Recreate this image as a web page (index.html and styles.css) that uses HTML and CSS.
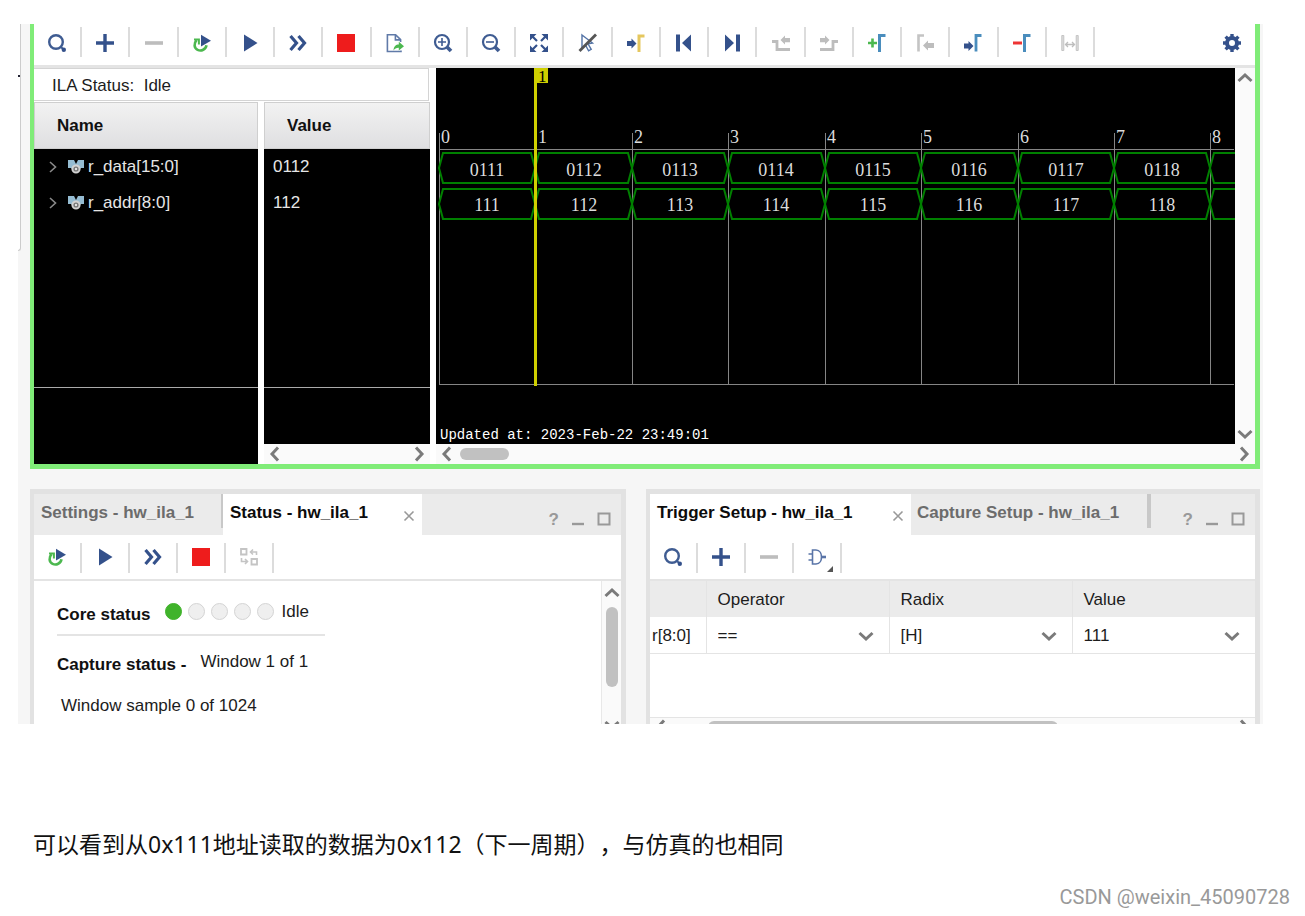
FILE: index.html
```html
<!DOCTYPE html>
<html lang="zh-CN">
<head>
<meta charset="utf-8">
<title>ILA 波形</title>
<link rel="stylesheet" href="styles.css">
</head>
<body>
<svg class="defs" aria-hidden="true">
  <symbol id="search" viewBox="0 0 20 20"><circle cx="9" cy="9" r="6.8" fill="none" stroke="#3f5c92" stroke-width="2.4"/><path d="M13.5 13.5l3 3" stroke="#3f5c92" stroke-width="2"/><circle cx="16.8" cy="16.8" r="2.2" fill="#34518b"/></symbol>
  <symbol id="plus" viewBox="0 0 20 20"><path d="M10 1v18M1 10h18" stroke="#34518b" stroke-width="3.4"/></symbol>
  <symbol id="minus" viewBox="0 0 20 20"><path d="M1 10h18" stroke="#bdbdbd" stroke-width="3.6"/></symbol>
  <symbol id="rerun" viewBox="0 0 20 20"><path d="M4.6 7.2C1.6 10.500 2 15 5.600 16.800c3.700 1.800 8.200-.3 8.900-4.600" fill="none" stroke="#4cb84f" stroke-width="2.600"/><path d="M2 6.600h4.900v4.800" fill="none" stroke="#4cb84f" stroke-width="2"/><path d="M9 1.800l10 5.900-10 5.900z" fill="#34518b"/></symbol>
  <symbol id="play" viewBox="0 0 20 20"><path d="M4 1.500l13.500 8.500L4 18.500z" fill="#34518b"/></symbol>
  <symbol id="fast" viewBox="0 0 20 20"><path d="M2.500 3l6 7-6 7M10.500 3l6 7-6 7" fill="none" stroke="#34518b" stroke-width="3.200"/></symbol>
  <symbol id="stop" viewBox="0 0 20 20"><path d="M1 1h18v18H1z" fill="#ee1c1c"/></symbol>
  <symbol id="export" viewBox="0 0 20 20"><path d="M16 17.500v1H2.400V1.700h8.200l5 5V9M10.400 1.700v5.200h5.200" fill="none" stroke="#607aa8" stroke-width="1.600"/><path d="M8.500 17.500c.3-4.200 2.300-6 5.300-6V8.800l5.200 4.500-5.200 4.200v-2.700c-2.300-.1-4 .7-5.300 2.700z" fill="#4cb84f"/></symbol>
  <symbol id="zoomin" viewBox="0 0 20 20"><circle cx="9" cy="9" r="7" fill="none" stroke="#3f5c92" stroke-width="2.200"/><path d="M5 9h8M9 5v8" stroke="#3f5c92" stroke-width="1.600"/><path d="M14 14l4 4" stroke="#3f5c92" stroke-width="3.800"/></symbol>
  <symbol id="zoomout" viewBox="0 0 20 20"><circle cx="9" cy="9" r="7" fill="none" stroke="#3f5c92" stroke-width="2.200"/><path d="M5 9h8" stroke="#3f5c92" stroke-width="1.600"/><path d="M14 14l4 4" stroke="#3f5c92" stroke-width="3.800"/></symbol>
  <symbol id="fit" viewBox="0 0 20 20"><path d="M1 1h6.500L1 7.500zM19 1v6.500L12.500 1zM1 19v-6.500L7.500 19zM19 19h-6.500l6.500-6.500z" fill="#34518b"/><path d="M3 3l5 5M17 3l-5 5M3 17l5-5M17 17l-5-5" stroke="#34518b" stroke-width="2.200"/></symbol>
  <symbol id="nocursor" viewBox="0 0 20 20"><path d="M4 2l10.500 8-4.500.8 3.200 5.500-2.600 1.500-3-5.600L4 15z" fill="none" stroke="#5272a5" stroke-width="1.400"/><path d="M1.500 18L18 1.500" stroke="#555" stroke-width="2.800"/></symbol>
  <symbol id="tomark" viewBox="0 0 20 20"><path d="M1 8h4.500V5.500L10.500 10.500l-5 5V13H1z" fill="#34518b"/><path d="M13 19V3h5.500" fill="none" stroke="#e5c75e" stroke-width="3"/></symbol>
  <symbol id="first" viewBox="0 0 20 20"><path d="M2 1.500h4v17H2zM17 1.500v17L8 10z" fill="#34518b"/></symbol>
  <symbol id="last" viewBox="0 0 20 20"><path d="M14 1.500h4v17h-4zM3 1.500v17l9-8.500z" fill="#34518b"/></symbol>
  <symbol id="prevtr" viewBox="0 0 20 20"><path d="M1 8.500h5v8h13" fill="none" stroke="#bdbdbd" stroke-width="2.800"/><path d="M9.500 7l4.500-4.500v2.500h5v4.200h-5v2.400z" fill="#bdbdbd"/></symbol>
  <symbol id="nexttr" viewBox="0 0 20 20"><path d="M19 8.500h-5v8H1" fill="none" stroke="#bdbdbd" stroke-width="2.800"/><path d="M10.500 7L6 2.500v2.500H1v4.200h5v2.400z" fill="#bdbdbd"/></symbol>
  <symbol id="addmark" viewBox="0 0 20 20"><path d="M5.500 5.500v9M1 10h9" stroke="#4cb84f" stroke-width="2.600"/><path d="M12.500 19V2.500h6" fill="none" stroke="#4a8dbd" stroke-width="3"/></symbol>
  <symbol id="prevmark" viewBox="0 0 20 20"><path d="M3.500 18.500V2.500h5.500" fill="none" stroke="#c4c4c4" stroke-width="2.600"/><path d="M8 12.500l5-5V10h6v5h-6v2.500z" fill="#bdbdbd"/></symbol>
  <symbol id="nextmark" viewBox="0 0 20 20"><path d="M1 10.500h4.500V8l5 5-5 5v-2.500H1z" fill="#34518b"/><path d="M13 18.500v-16h5.500" fill="none" stroke="#4a8dbd" stroke-width="2.800"/></symbol>
  <symbol id="delmark" viewBox="0 0 20 20"><path d="M1 10h9" stroke="#ee3434" stroke-width="3"/><path d="M12.500 19V2.500h6" fill="none" stroke="#4a8dbd" stroke-width="3"/></symbol>
  <symbol id="range" viewBox="0 0 20 20"><path d="M1.800 2.500h2v15h-2zM16.200 2.500h2v15h-2z" fill="#ddd" stroke="#c4c4c4"/><path d="M5.500 11.500h9M8 9l-2.500 2.500L8 14M12 9l2.500 2.500L12 14" fill="none" stroke="#bdbdbd" stroke-width="1.300"/></symbol>
  <symbol id="gear" viewBox="0 0 20 20"><circle cx="10" cy="10" r="5" fill="none" stroke="#34518b" stroke-width="4"/><path d="M10 1v3.500M10 15.500V19M1 10h3.500M15.500 10H19M3.600 3.600l2.500 2.500M13.900 13.900l2.500 2.500M3.600 16.400l2.500-2.500M13.900 6.100l2.500-2.500" stroke="#34518b" stroke-width="3.400"/></symbol>
  <symbol id="swap" viewBox="0 0 20 20"><path d="M2 2h5.500v5.500H2zM12.500 12H18v5.500h-5.500z" fill="none" stroke="#c4c4c4" stroke-width="1.800"/><path d="M17.500 8V5H12M14 2.500L11.500 5 14 7.500M2.500 11v3.500H8M6 12l2.500 2.500L6 17" fill="none" stroke="#c4c4c4" stroke-width="1.600"/></symbol>
  <symbol id="gate" viewBox="0 0 20 20"><path d="M5.500 3H9c4 0 5.500 4 5.500 7S13 17 9 17H5.500zM1.500 7h4M1.500 13h4" fill="none" stroke="#5a75a8" stroke-width="1.600"/><path d="M14.500 10H19" stroke="#5a75a8" stroke-width="2.600"/></symbol>
  <symbol id="bus" viewBox="0 0 16 14"><path d="M0 0h6l2 4 2-4h6v8h-3l-2 2H5L3 8H0z" fill="#95bcd2"/><circle cx="8" cy="9" r="3.600" fill="#777" stroke="#d2d2d2" stroke-width="2"/><circle cx="8" cy="9" r="1.200" fill="#e4e4e4"/></symbol>
  <symbol id="down" viewBox="0 0 16 16"><path d="M1.500 5L8 11l6.500-6" fill="none" stroke="#7a7a7a" stroke-width="3"/></symbol>
  <symbol id="up" viewBox="0 0 16 16"><path d="M1.500 11L8 5l6.500 6" fill="none" stroke="#7a7a7a" stroke-width="3"/></symbol>
  <symbol id="left" viewBox="0 0 16 16"><path d="M11 1.500L5 8l6 6.500" fill="none" stroke="#7a7a7a" stroke-width="3"/></symbol>
  <symbol id="right" viewBox="0 0 16 16"><path d="M5 1.500L11 8l-6 6.500" fill="none" stroke="#7a7a7a" stroke-width="3"/></symbol>
  <symbol id="close" viewBox="0 0 12 12"><path d="M1.500 1.500l9 9M10.500 1.500l-9 9" stroke="#999" stroke-width="1.600"/></symbol>
  <symbol id="min" viewBox="0 0 14 14"><path d="M1 12h12" stroke="#999" stroke-width="2.400"/></symbol>
  <symbol id="max" viewBox="0 0 14 14"><path d="M1.500 1.500h11v11h-11z" fill="none" stroke="#999" stroke-width="2"/></symbol>
</svg>

<main class="ide">
  <span class="edge"></span><span class="speck"></span>
  <section class="scope">
    <div class="bar">
      <div class="tools many">
        <button aria-label="Search"><svg><use href="#search"/></svg></button>
        <button aria-label="Add"><svg><use href="#plus"/></svg></button>
        <button aria-label="Remove"><svg><use href="#minus"/></svg></button>
        <button aria-label="Auto re-trigger"><svg><use href="#rerun"/></svg></button>
        <button aria-label="Run trigger"><svg><use href="#play"/></svg></button>
        <button aria-label="Run immediate"><svg><use href="#fast"/></svg></button>
        <button aria-label="Stop"><svg><use href="#stop"/></svg></button>
        <button aria-label="Export"><svg><use href="#export"/></svg></button>
        <button aria-label="Zoom in"><svg><use href="#zoomin"/></svg></button>
        <button aria-label="Zoom out"><svg><use href="#zoomout"/></svg></button>
        <button aria-label="Zoom fit"><svg><use href="#fit"/></svg></button>
        <button aria-label="Cursor off"><svg><use href="#nocursor"/></svg></button>
        <button aria-label="Go to cursor"><svg><use href="#tomark"/></svg></button>
        <button aria-label="First"><svg><use href="#first"/></svg></button>
        <button aria-label="Last"><svg><use href="#last"/></svg></button>
        <button aria-label="Previous transition"><svg><use href="#prevtr"/></svg></button>
        <button aria-label="Next transition"><svg><use href="#nexttr"/></svg></button>
        <button aria-label="Add marker"><svg><use href="#addmark"/></svg></button>
        <button aria-label="Previous marker"><svg><use href="#prevmark"/></svg></button>
        <button aria-label="Next marker"><svg><use href="#nextmark"/></svg></button>
        <button aria-label="Delete marker"><svg><use href="#delmark"/></svg></button>
        <button aria-label="Swap cursors"><svg><use href="#range"/></svg></button>
      </div>
      <div class="settings"><button aria-label="Settings"><svg><use href="#gear"/></svg></button></div>
    </div>
    <div class="view">
      <div class="signals">
        <div class="ila">ILA Status:&nbsp; Idle</div>
        <div class="cols">
          <div class="col name">
            <div class="head">Name</div>
            <div class="dark">
              <div class="sig"><svg class="twist" viewBox="0 0 8 12"><path d="M1 1l5.500 5L1 11" fill="none" stroke="#8a8a8a" stroke-width="1.600"/></svg><svg class="bus"><use href="#bus"/></svg>r_data[15:0]</div>
              <div class="sig"><svg class="twist" viewBox="0 0 8 12"><path d="M1 1l5.500 5L1 11" fill="none" stroke="#8a8a8a" stroke-width="1.600"/></svg><svg class="bus"><use href="#bus"/></svg>r_addr[8:0]</div>
              <div class="rule"></div>
            </div>
          </div>
          <div class="col value">
            <div class="head">Value</div>
            <div class="dark">
              <div class="sig">0112</div>
              <div class="sig">112</div>
              <div class="rule"></div>
            </div>
            <div class="hscroll"><svg><use href="#left"/></svg><svg><use href="#right"/></svg></div>
          </div>
        </div>
      </div>
      <div class="wave">
        <div class="plot">
          <svg class="canvas">
            <defs>
              <path id="cells" d="M3 100l4-15h88l4 15-4 15H7zM99 100l4-15h89l4 15-4 15h-89zM196 100l4-15h88l4 15-4 15h-88zM292 100l4-15h89l4 15-4 15h-89zM389 100l4-15h88l4 15-4 15h-88zM485 100l4-15h89l4 15-4 15h-89zM582 100l4-15h88l4 15-4 15h-88zM678 100l4-15h88l4 15-4 15h-88zM1600 85H778l-4 15 4 15h822"/>
            </defs>
            <path class="grid" d="M3.500 65v251M196.500 65v251M292.500 65v251M389.500 65v251M485.500 65v251M582.500 65v251M678.500 65v251M774.500 65v251M3 316.500h795M3 81.500h795"/>
            <use class="trace" href="#cells"/><use class="trace" href="#cells" y="36"/>
            <g class="digits">
              <text x="5" y="75">0</text><text x="102" y="75">1</text><text x="198" y="75">2</text><text x="294" y="75">3</text><text x="391" y="75">4</text><text x="487" y="75">5</text><text x="584" y="75">6</text><text x="680" y="75">7</text><text x="776" y="75">8</text>
            </g>
            <g class="digits mid">
              <text x="51" y="108">0111</text><text x="148" y="108">0112</text><text x="244" y="108">0113</text><text x="340" y="108">0114</text><text x="437" y="108">0115</text><text x="533" y="108">0116</text><text x="630" y="108">0117</text><text x="726" y="108">0118</text>
              <text x="51" y="143">111</text><text x="148" y="143">112</text><text x="244" y="143">113</text><text x="340" y="143">114</text><text x="437" y="143">115</text><text x="533" y="143">116</text><text x="630" y="143">117</text><text x="726" y="143">118</text>
            </g>
            <path d="M98 0h14v15h-11v303h-3z" fill="#cfcf00"/>
            <text class="flag" x="102" y="14">1</text>
            <text class="stamp" x="4" y="371">Updated at: 2023-Feb-22 23:49:01</text>
          </svg>
          <div class="vscroll"><svg><use href="#up"/></svg><svg><use href="#down"/></svg></div>
        </div>
        <div class="hscroll"><svg><use href="#left"/></svg><i class="thumb"></i><svg><use href="#right"/></svg></div>
      </div>
    </div>
  </section>

  <div class="panels">
    <section class="panel status">
      <div class="tabs">
        <button class="tab first">Settings - hw_ila_1</button>
        <button class="tab on">Status - hw_ila_1<svg><use href="#close"/></svg></button>
        <div class="win"><b>?</b><svg><use href="#min"/></svg><svg><use href="#max"/></svg></div>
      </div>
      <div class="tools">
        <button aria-label="Auto re-trigger"><svg><use href="#rerun"/></svg></button>
        <button aria-label="Run trigger"><svg><use href="#play"/></svg></button>
        <button aria-label="Run immediate"><svg><use href="#fast"/></svg></button>
        <button aria-label="Stop"><svg><use href="#stop"/></svg></button>
        <button aria-label="Toggle layout"><svg><use href="#swap"/></svg></button>
      </div>
      <div class="body">
        <div class="info">
          <div class="core"><b>Core status</b><i class="dot lit"></i><i class="dot"></i><i class="dot"></i><i class="dot"></i><i class="dot"></i><span>Idle</span></div>
          <div class="capture"><b>Capture status -</b><span>Window 1 of 1</span></div>
          <div class="sample">Window sample 0 of 1024</div>
        </div>
        <div class="vscroll"><svg><use href="#up"/></svg><i class="vthumb"></i><svg><use href="#down"/></svg></div>
      </div>
    </section>
    <section class="panel trigger">
      <div class="tabs">
        <button class="tab on">Trigger Setup - hw_ila_1<svg><use href="#close"/></svg></button>
        <button class="tab last">Capture Setup - hw_ila_1</button>
        <div class="win"><b>?</b><svg><use href="#min"/></svg><svg><use href="#max"/></svg></div>
      </div>
      <div class="tools">
        <button aria-label="Search"><svg><use href="#search"/></svg></button>
        <button aria-label="Add"><svg><use href="#plus"/></svg></button>
        <button aria-label="Remove"><svg><use href="#minus"/></svg></button>
        <button aria-label="Trigger condition" class="menu"><svg><use href="#gate"/></svg></button>
      </div>
      <div class="setup">
        <table>
          <thead><tr><th class="port"></th><th>Operator</th><th>Radix</th><th>Value</th></tr></thead>
          <tbody><tr>
            <td class="port">r[8:0]</td>
            <td><label class="pick"><select aria-label="Operator"><option>==</option></select><svg><use href="#down"/></svg></label></td>
            <td><label class="pick"><select aria-label="Radix"><option>[H]</option></select><svg><use href="#down"/></svg></label></td>
            <td><label class="pick"><select aria-label="Value"><option>111</option></select><svg><use href="#down"/></svg></label></td>
          </tr></tbody>
        </table>
        <div class="hscroll"><svg><use href="#left"/></svg><i class="thumb"></i><svg><use href="#right"/></svg></div>
      </div>
    </section>
  </div>
</main>
<p class="note">可以看到从0x111地址读取的数据为0x112（下一周期），与仿真的也相同</p>
<footer>CSDN @weixin_45090728</footer>
</body>
</html>
```
FILE: styles.css
```css
* { box-sizing: border-box; }
body { margin: 0; background: #fff; color: #1c1c1c; font: 17px/20px "Liberation Sans", Arial, sans-serif; }
button { padding: 0; border: 0; background: none; font: inherit; color: inherit; }
svg { display: block; flex: none; }
.defs { display: none; }

.ide { position: relative; margin: 24px 42px 0 18px; padding: 0 3px 0 12px; background: #f6f6f6; overflow: hidden; }
.edge { position: absolute; left: 0; top: 0; width: 3px; height: 227px; background: #fff; border: solid #ccc; border-width: 0 1px 1px 0; border-bottom-right-radius: 3px; }
.speck { position: absolute; left: 0; top: 51px; width: 2px; height: 2px; background: #223; }

.scope { border: solid #80ec78; border-width: 0 5px 5px 4px; background: #fff; }
.bar { display: flex; height: 44px; border-bottom: 3px solid #e4e4e4; }
.tools { display: flex; height: 46px; border-bottom: 2px solid #e4e4e4; }
.tools button { position: relative; width: 48px; height: 44px; padding-right: 2px; display: grid; place-items: center; }
.tools button::after { content: ""; position: absolute; right: 0; top: 8px; width: 2px; height: 30px; background: #dcdcdc; }
.tools svg, .settings svg { width: 20px; height: 20px; }
.tools.many { flex: 1; display: grid; grid-template-columns: repeat(22, 1fr); height: 38px; border: 0; }
.tools.many button { width: auto; height: 38px; }
.tools.many button::after { top: 3px; }
.settings { width: 160px; height: 38px; display: flex; align-items: center; justify-content: flex-end; padding-right: 13px; }

.view { display: flex; height: 396px; }
.signals { width: 396px; display: flex; flex-direction: column; }
.ila { height: 33px; margin-right: 1px; padding: 0 18px; line-height: 34px; border: 1px solid #d4d4d4; border-left: 0; }
.cols { flex: 1; display: flex; gap: 6px; padding-top: 1px; }
.col { display: flex; flex-direction: column; }
.name { width: 224px; }
.value { flex: 1; }
.head { height: 47px; padding: 0 22px; border: 1px solid #cfcfcf; background: linear-gradient(#f2f2f2, #dfdfe1); font-weight: bold; line-height: 45px; color: #111; }
.dark { flex: 1; position: relative; background: #000; color: #e6e6e6; }
.sig { display: flex; align-items: center; height: 36px; padding: 0 9px; }
.name .sig { padding-left: 15px; }
.twist { width: 8px; height: 12px; margin-right: 11px; }
.bus { width: 16px; height: 14px; margin-right: 4px; }
.rule { height: 1px; margin-top: 166px; background: #aaa; }
.hscroll { height: 20px; display: flex; align-items: center; justify-content: space-between; padding: 0 3px; background: #fafafa; }
.hscroll svg, .vscroll svg, .pick svg { width: 16px; height: 16px; }
.thumb { width: 49px; height: 12px; margin: 0 auto 0 5px; border-radius: 6px; background: #c1c1c1; }
.vscroll { width: 20px; display: flex; flex-direction: column; align-items: center; justify-content: space-between; padding: 2px 0; background: #fafafa; }

.wave { flex: 1; min-width: 0; margin-left: 6px; display: flex; flex-direction: column; }
.plot { flex: 1; display: flex; min-height: 0; }
.canvas { flex: 1; min-width: 0; height: 376px; background: #000; }
.grid { stroke: #858585; }
.trace { fill: none; stroke: #008000; stroke-width: 2; }
.digits { fill: #dcdcdc; font: 18px "Liberation Serif", serif; }
.mid { text-anchor: middle; }
.flag { fill: #000; font: 17px "Liberation Serif", serif; }
.stamp { fill: #fff; font: 14px "Liberation Mono", monospace; }

.panels { display: flex; gap: 20px; margin-top: 20px; height: 235px; }
.panel { border: 5px solid #e2e2e2; border-width: 5px 5px 0 4px; background: #fff; overflow: hidden; }
.status { width: 596px; }
.trigger { flex: 1; min-width: 0; }
.tabs { display: flex; height: 41px; background: #ebebeb; }
.tab { display: flex; align-items: center; height: 41px; padding: 0 7px 3px; font-weight: bold; color: #6c6c6c; white-space: nowrap; }
.tab.on { justify-content: space-between; background: #fff; color: #0c0c0c; }
.tab svg { width: 12px; height: 12px; margin-top: 5px; }
.first { position: relative; width: 189px; padding-left: 7px; }
.first::after, .last::after { content: ""; position: absolute; right: 0; top: 0; width: 2px; height: 34px; background: #c8c8c8; }
.status .on { width: 199px; }
.trigger .on { width: 261px; }
.last { position: relative; width: 240px; padding-left: 6px; }
.last::after { width: 4px; }
.win { display: flex; gap: 12px; margin-left: auto; padding: 18px 10px 0 0; color: #999; }
.win b { line-height: 16px; }
.win svg { width: 14px; height: 14px; }
.body { display: flex; height: 154px; }
.info { flex: 1; padding: 18px 23px; }
.info b { color: #111; }
.core { display: flex; width: 268px; height: 37px; align-items: flex-start; border-bottom: 2px solid #e4e4e4; }
.core b { margin: 6px 14px 0 0; }
.core span { margin: 3px 0 0 2px; }
.dot { width: 17px; height: 17px; margin: 4px 6px 0 0; border: 1px solid #d4d4d4; border-radius: 50%; background: #efefef; }
.lit { background: #40b32b; border-color: #40b32b; }
.capture { display: flex; gap: 14px; margin-top: 16px; }
.capture b { margin-top: 3px; }
.sample { margin: 21px 0 0 4px; }
.body .vscroll { padding-top: 4px; border-left: 1px solid #e8e8e8; }
.vthumb { width: 12px; height: 80px; margin: 6px 0 auto; border-radius: 6px; background: #c1c1c1; }

.menu::before { content: ""; position: absolute; right: 9px; bottom: 7px; border: 3px solid; border-color: transparent #555 #555 transparent; }
.setup table { width: 100%; table-layout: fixed; border-collapse: collapse; }
.setup th, .setup td { height: 36px; padding: 2px 11px 0; border-left: 1px solid #e4e4e4; text-align: left; font-weight: normal; }
.setup th { background: #ebebeb; }
.setup td { border-bottom: 1px solid #e4e4e4; }
.setup .port { width: 56px; padding: 2px 0 0 2px; border-left: 0; }
.pick { display: grid; grid-template-columns: 1fr 16px; align-items: center; padding-right: 4px; }
.pick select { appearance: none; border: 0; padding: 0; background: none; font: inherit; color: inherit; }
.setup .hscroll { margin-top: 63px; border-top: 1px solid #e4e4e4; }
.setup .thumb { width: 350px; margin-left: 39px; }

.note { margin: 102px 33px 0; color: #111; font: 23px/36px "Noto Sans", "Noto Sans CJK SC", sans-serif; text-spacing-trim: space-all; }
footer { margin: 23px 15px 0; text-align: right; color: #999; font: 20px/24px Roboto, sans-serif; }
```
